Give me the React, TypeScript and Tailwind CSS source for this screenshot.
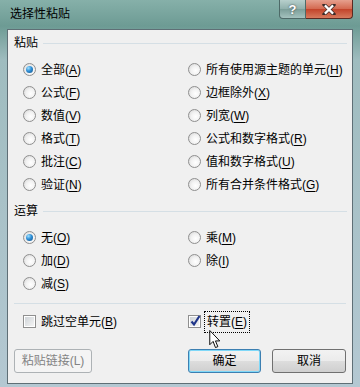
import React from "react";

type Opt = { label: string; key: string; checked?: boolean };

function Label({ label, k }: { label: string; k: string }) {
  const i = label.lastIndexOf("(" + k + ")");
  return (
    <span className="whitespace-nowrap">
      {label.slice(0, i)}(<u className="underline-offset-2">{k}</u>)
    </span>
  );
}

function Radio({ checked }: { checked?: boolean }) {
  return (
    <span className="relative flex h-[13px] w-[13px] shrink-0 items-center justify-center rounded-full border border-[#8f8f8f] bg-[radial-gradient(circle_at_60%_60%,#ffffff_0%,#f2f2f2_45%,#d2d2d2_100%)]">
      {checked && (
        <span className="h-[7px] w-[7px] rounded-full bg-[radial-gradient(circle_at_35%_30%,#9fe0ff_0%,#2f8fd6_45%,#124f86_100%)]" />
      )}
    </span>
  );
}

function Checkbox({ checked }: { checked?: boolean }) {
  return (
    <span className="relative flex h-[13px] w-[13px] shrink-0 items-center justify-center border border-[#8f8f8f] bg-white">
      <span className="absolute inset-[1px] bg-[linear-gradient(135deg,#cfd4d8,#f4f4f4)]" />
      {checked && (
        <svg viewBox="0 0 13 13" className="absolute left-[0px] top-[-2px] h-[14px] w-[13px]">
          <path d="M2.5 7 L5 10 L10.5 1.5" fill="none" stroke="#20368a" strokeWidth="2.2" />
        </svg>
      )}
    </span>
  );
}

function RadioRow({ o }: { o: Opt }) {
  return (
    <div className="flex h-[23px] items-center gap-[5px]">
      <Radio checked={o.checked} />
      <Label label={o.label} k={o.key} />
    </div>
  );
}

function GroupHeader({ title }: { title: string }) {
  return (
    <div className="flex h-[16px] items-center pl-[6px] pr-[5px]">
      <span>{title}</span>
      <span className="ml-[5px] h-px flex-1 bg-[#d5dfe5]" />
    </div>
  );
}

const pasteLeft: Opt[] = [
  { label: "全部(A)", key: "A", checked: true },
  { label: "公式(F)", key: "F" },
  { label: "数值(V)", key: "V" },
  { label: "格式(T)", key: "T" },
  { label: "批注(C)", key: "C" },
  { label: "验证(N)", key: "N" },
];
const pasteRight: Opt[] = [
  { label: "所有使用源主题的单元(H)", key: "H" },
  { label: "边框除外(X)", key: "X" },
  { label: "列宽(W)", key: "W" },
  { label: "公式和数字格式(R)", key: "R" },
  { label: "值和数字格式(U)", key: "U" },
  { label: "所有合并条件格式(G)", key: "G" },
];
const opLeft: Opt[] = [
  { label: "无(O)", key: "O", checked: true },
  { label: "加(D)", key: "D" },
  { label: "减(S)", key: "S" },
];
const opRight: Opt[] = [
  { label: "乘(M)", key: "M" },
  { label: "除(I)", key: "I" },
];

function Button({
  children,
  variant,
  className,
}: {
  children: React.ReactNode;
  variant?: "default" | "disabled";
  className?: string;
}) {
  const border =
    variant === "default"
      ? "border-[#3c7fb1] shadow-[inset_0_0_0_1px_#7fd8f8]"
      : variant === "disabled"
      ? "border-[#adb2b5]"
      : "border-[#707070]";
  const bg =
    variant === "disabled"
      ? "bg-[#f4f4f4] text-[#838383]"
      : "bg-[linear-gradient(180deg,#f2f2f2_0%,#ebebeb_50%,#dddddd_51%,#cfcfcf_100%)] text-black";
  return (
    <div
      className={`flex h-[24px] items-center justify-center rounded-[3px] border ${border} ${bg} ${className ?? ""}`}
    >
      {children}
    </div>
  );
}

export default function App() {
  return (
    <div className="relative h-[387px] w-[360px] overflow-hidden bg-[linear-gradient(180deg,#86b0a9_0px,#6d9b94_26px,#9fbcbf_60px,#b4c8d2_100%)] font-['Liberation_Sans','Noto_Sans_CJK_SC',sans-serif] text-[12px] leading-none text-black">
      {/* title bar */}
      <div className="flex h-[29px] items-start">
        <span className="pl-[10px] pt-[8px] text-[12px]">选择性粘贴</span>
        <div className="ml-auto mr-[7px] flex">
          <div className="flex h-[19px] w-[27px] items-center justify-center rounded-bl-[4px] border border-t-0 border-[#4e6a68] bg-[linear-gradient(180deg,#b7cfcc,#8fb0ac_50%,#7b9e99_51%,#a4c2be)] text-[13px] font-bold text-white [text-shadow:0_0_2px_#333]">
            ?
          </div>
          <div className="flex h-[19px] w-[47px] items-center justify-center rounded-br-[4px] border border-l-0 border-t-0 border-[#5a2a22] bg-[linear-gradient(180deg,#e6a08e,#d3684f_50%,#c2432a_51%,#d77a5d)] text-[13px] font-bold text-white [text-shadow:0_0_2px_#333]">
            <svg viewBox="0 0 14 12" className="h-[11px] w-[14px]">
              <path d="M2 1 L12 11 M12 1 L2 11" stroke="#3a2a28" strokeWidth="4" strokeLinecap="square" />
              <path d="M2.5 1.5 L11.5 10.5 M11.5 1.5 L2.5 10.5" stroke="#ffffff" strokeWidth="2.4" />
            </svg>
          </div>
        </div>
      </div>

      {/* client area */}
      <div className="mx-[7px] flex h-[355px] flex-col border border-[#5f6f76] bg-[#f0f0f0] pt-[5px]">
        <GroupHeader title="粘贴" />
        <div className="mt-[7px] grid grid-cols-[165px_1fr] pl-[15px]">
          <div className="flex flex-col">
            {pasteLeft.map((o) => (
              <RadioRow key={o.key} o={o} />
            ))}
          </div>
          <div className="flex flex-col">
            {pasteRight.map((o) => (
              <RadioRow key={o.key} o={o} />
            ))}
          </div>
        </div>

        <div className="mt-[7px]">
          <GroupHeader title="运算" />
        </div>
        <div className="mt-[7px] grid grid-cols-[165px_1fr] pl-[15px]">
          <div className="flex flex-col">
            {opLeft.map((o) => (
              <RadioRow key={o.key} o={o} />
            ))}
          </div>
          <div className="flex flex-col">
            {opRight.map((o) => (
              <RadioRow key={o.key} o={o} />
            ))}
          </div>
        </div>

        <div className="mx-[6px] mt-[8px] h-px bg-[#d5dfe5]" />

        <div className="mt-[8px] grid grid-cols-[165px_1fr] pl-[15px]">
          <div className="flex h-[19px] items-center gap-[5px]">
            <Checkbox />
            <Label label="跳过空单元(B)" k="B" />
          </div>
          <div className="relative flex h-[19px] items-center gap-[3px]">
            <Checkbox checked />
            <span className="border border-dotted border-black px-[2px] py-[4px]">
              <Label label="转置(E)" k="E" />
            </span>
            <svg viewBox="0 0 12 20" className="absolute left-[21px] top-[18px] h-[19px] w-[12px]">
              <path
                d="M0.5 0.5 L0.5 15.5 L4 12 L6.5 18.5 L9 17.5 L6.5 11.5 L11 11.5 Z"
                fill="#ffffff"
                stroke="#000000"
                strokeWidth="1"
                strokeLinejoin="round"
              />
            </svg>
          </div>
        </div>

        <div className="mt-[18px] flex pl-[6px] pr-[6px]">
          <Button variant="disabled" className="w-[78px]">
            粘贴链接(L)
          </Button>
          <Button variant="default" className="ml-auto w-[73px]">
            确定
          </Button>
          <Button className="ml-[11px] w-[74px]">取消</Button>
        </div>
      </div>
    </div>
  );
}
